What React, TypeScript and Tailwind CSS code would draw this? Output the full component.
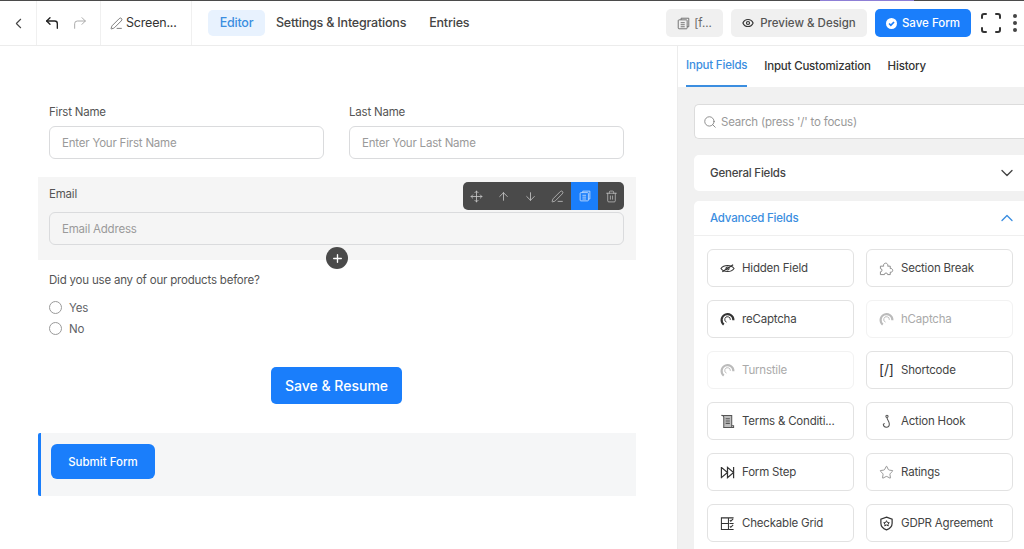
import {
  ArrowDown,
  ArrowUp,
  ChevronDown,
  ChevronLeft,
  ChevronUp,
  CornerUpLeft,
  CornerUpRight,
  Eye,
  Move,
  PenLine,
  Plus,
  Search,
  Star,
  Trash2,
} from 'lucide-react';

function Captcha({ className }: { className?: string }) {
  return (
    <svg viewBox="0 0 16 16" fill="none" className={className} stroke="currentColor" strokeWidth="2.300">
      <path d="M4 13.400A6.300 6.300 0 1 1 14.300 8.800" />
      <path d="M7 10.800A3 3 0 1 1 11 8.400" strokeWidth="1" />
    </svg>
  );
}

function HiddenEye({ className }: { className?: string }) {
  return (
    <svg viewBox="0 0 16 16" fill="none" className={className} stroke="currentColor" strokeWidth="1.100">
      <path d="M1 8c1.600-2.200 4-3.300 7-3.300s5.400 1.100 7 3.300c-1.600 2.200-4 3.300-7 3.300S2.600 10.200 1 8Z" />
      <circle cx="8" cy="8" r="1.700" />
      <path d="M2.500 11.500 14 4" strokeWidth="1.300" />
    </svg>
  );
}

function PuzzlePiece({ className }: { className?: string }) {
  return (
    <svg viewBox="0 0 16 16" fill="none" className={className} stroke="currentColor" strokeWidth="1">
      <path d="M1.500 5.500H5a2.300 2.300 0 1 1 4.400-.6l-.2.600H12v2.600a2 2 0 1 1 0 3.800v2.600H9.200a1.700 1.700 0 1 0-3.400 0H1.500v-3a1.700 1.700 0 1 0 0-3.400V5.500Z" />
    </svg>
  );
}

function ScrollDoc({ className }: { className?: string }) {
  return (
    <svg viewBox="0 0 16 16" className={className} fill="none" stroke="currentColor" strokeWidth="1.100">
      <path d="M1.500 1.500h11v13H4V3.500a2 2 0 0 0-2.500-2Z" fill="#bdbdbd" />
      <path d="M12.500 12.500h2v2H4M6 5h4.500M6 7.500h4.500M6 10h4.500" />
    </svg>
  );
}

function FormStep({ className }: { className?: string }) {
  return (
    <svg viewBox="0 0 16 16" fill="none" className={className} stroke="currentColor" strokeWidth="1.300">
      <path d="M1.500 2v12M14.500 2v12M1.500 2.500 8 8l-6.500 5.500M8 2.500 14.500 8 8 13.500V2.500Z" />
    </svg>
  );
}

function Hook({ className }: { className?: string }) {
  return (
    <svg viewBox="0 0 16 16" fill="none" className={className} stroke="currentColor" strokeWidth="1.100">
      <circle cx="8.500" cy="2.500" r="1.200" />
      <path d="M8.500 3.700c0 2.500 2.500 3.500 2.500 7a3.200 3.200 0 0 1-6.400.3l1.400-1" />
    </svg>
  );
}

function GridCheck({ className }: { className?: string }) {
  return (
    <svg viewBox="0 0 16 16" fill="none" className={className} stroke="currentColor" strokeWidth="1.100">
      <path d="M9 2H1.500v12.500H9V2ZM1.500 8H9M9 2h5.500M9 14.500h5.500" />
      <path d="m10.500 4.500 1 1 2.500-2.500M10.500 11l1 1 2.500-2.500M10 8h4.500" />
    </svg>
  );
}

function ShieldStar({ className }: { className?: string }) {
  return (
    <svg viewBox="0 0 16 16" fill="none" className={className} stroke="currentColor" strokeWidth="1.300">
      <path d="M8 1.200 14 3.400v4.200c0 3.400-2.500 5.800-6 7.200-3.500-1.400-6-3.800-6-7.200V3.400L8 1.200Z" />
      <path d="m8 5 .9 1.900 2.100.3-1.500 1.400.4 2L8 9.600l-1.900 1 .4-2L5 7.200l2.100-.3L8 5Z" strokeWidth="1" />
    </svg>
  );
}

function DocStack({ className }: { className?: string }) {
  return (
    <svg viewBox="0 0 16 16" fill="none" className={className} stroke="currentColor" strokeWidth="1.100">
      <path d="M5 3.500V1.500h9.500v10.500h-2" />
      <rect x="1.500" y="3.500" width="11" height="11" rx="1" />
      <path d="M4.500 7h5M4.500 9.500h5M4.500 12h5" />
    </svg>
  );
}

function FullscreenCorners() {
  return (
    <svg viewBox="0 0 20 20" fill="none" className="w-5 h-5 text-[#333]" stroke="currentColor" strokeWidth="2" strokeLinecap="round">
      <path d="M1 5V3a2 2 0 0 1 2-2h2M15 1h2a2 2 0 0 1 2 2v2M19 15v2a2 2 0 0 1-2 2h-2M5 19H3a2 2 0 0 1-2-2v-2" />
    </svg>
  );
}

function Shortcode() {
  return <span className="w-[15px] text-[14px] leading-none text-[#333] shrink-0 whitespace-nowrap">[/]</span>;
}

const iconClass = 'w-[15px] h-[15px] shrink-0';

const advancedFields = [
  { label: 'Hidden Field', icon: <HiddenEye className={`${iconClass} text-[#333]`} /> },
  { label: 'Section Break', icon: <PuzzlePiece className={`${iconClass} text-[#888]`} /> },
  { label: 'reCaptcha', icon: <Captcha className={`${iconClass} text-[#333]`} /> },
  { label: 'hCaptcha', icon: <Captcha className={`${iconClass} text-[#bbb]`} />, disabled: true },
  { label: 'Turnstile', icon: <Captcha className={`${iconClass} text-[#bbb]`} />, disabled: true },
  { label: 'Shortcode', icon: <Shortcode /> },
  { label: 'Terms & Conditi...', icon: <ScrollDoc className={`${iconClass} text-[#555]`} /> },
  { label: 'Action Hook', icon: <Hook className={`${iconClass} text-[#555]`} /> },
  { label: 'Form Step', icon: <FormStep className={`${iconClass} text-[#333]`} /> },
  { label: 'Ratings', icon: <Star className={`${iconClass} text-[#777]`} strokeWidth={1.2} /> },
  { label: 'Checkable Grid', icon: <GridCheck className={`${iconClass} text-[#333]`} /> },
  { label: 'GDPR Agreement', icon: <ShieldStar className={`${iconClass} text-[#333]`} /> },
];

function Field({ label, placeholder }: { label: string; placeholder: string }) {
  return (
    <div className="flex-1">
      <div className="text-[11.5px] tracking-[-0.2px] leading-[16px] text-[#555] mb-[6px]">{label}</div>
      <div className="h-[33px] rounded-[6px] border border-[#dadbdd] px-3 pt-[2px] flex items-center text-[11.5px] tracking-[-0.2px] text-[#9a9a9a] bg-white">
        {placeholder}
      </div>
    </div>
  );
}

function Radio({ label }: { label: string }) {
  return (
    <div className="h-[21px] flex items-center gap-[7px] text-[11.5px] tracking-[-0.2px] text-[#606266]">
      <span className="w-[13px] h-[13px] rounded-full border border-[#9a9a9a] bg-white" />
      <span className="pt-[2px]">{label}</span>
    </div>
  );
}

function Header() {
  return (
    <header className="h-[46px] shrink-0 flex flex-col border-b border-[#ececec]">
      <div className="h-[1px] flex shrink-0 bg-[#4b4b4b]">
        <div className="ml-[820px] w-[94px] bg-[#8e7fd6]" />
      </div>
      <div className="flex-1 flex items-stretch text-[12.5px] tracking-[-0.2px] text-[#333]">
        <div className="w-[37px] flex items-center justify-center border-r border-[#f0f0f0]">
          <ChevronLeft className="w-[17px] h-[17px] text-[#444]" strokeWidth={1.5} />
        </div>
        <div className="w-[64px] flex items-center gap-[12px] pl-[7px] border-r border-[#f0f0f0]">
          <CornerUpLeft className="w-[16px] h-[16px] text-[#222]" strokeWidth={2} />
          <CornerUpRight className="w-[16px] h-[16px] text-[#aaa]" strokeWidth={1.5} />
        </div>
        <div className="w-[91px] flex items-center gap-[3px] pl-[9px] border-r border-[#f0f0f0]">
          <PenLine className="w-[13px] h-[13px] text-[#555]" strokeWidth={1.4} />
          <span className="pt-[1px]">Screen...</span>
        </div>
        <nav className="flex items-center ml-[16px] gap-[11px] font-medium">
          <span className="h-[26px] w-[57px] rounded-[5px] bg-[#e8f2fe] text-[#3b8ee0] flex items-center justify-center pt-[1px]">Editor</span>
          <span className="text-[#444] pt-[1px]">Settings & Integrations</span>
          <span className="ml-[12px] text-[#444] pt-[1px]">Entries</span>
        </nav>
        <div className="ml-auto flex items-center pr-[7px] tracking-normal">
          <button className="h-[28px] w-[57px] rounded-[5px] bg-[#f0f0f0] text-[#666] text-[11.5px] flex items-center justify-center gap-[4px]">
            <DocStack className="w-[13px] h-[13px]" />
            <span className="pt-[1px]">[f...</span>
          </button>
          <button className="ml-[8px] h-[28px] w-[136px] rounded-[5px] bg-[#f0f0f0] text-[#555] text-[11.5px] font-medium flex items-center justify-center gap-[6px]">
            <Eye className="w-[12px] h-[12px] text-[#333]" strokeWidth={2.4} />
            <span className="pt-[1px]">Preview & Design</span>
          </button>
          <button className="ml-[8px] h-[28px] w-[96px] rounded-[5px] bg-[#1a7efb] text-white text-[11.5px] font-medium flex items-center justify-center gap-[5px]">
            <span className="w-[11px] h-[11px] rounded-full bg-white flex items-center justify-center">
              <svg viewBox="0 0 10 10" className="w-[11px] h-[11px]" fill="none" stroke="#1a7efb" strokeWidth="1.500">
                <path d="m2.800 5 1.600 1.600L7.300 3.600" />
              </svg>
            </span>
            <span className="pt-[1px]">Save Form</span>
          </button>
          <div className="ml-[10px]">
            <FullscreenCorners />
          </div>
          <div className="ml-[12px] flex flex-col gap-[3px]">
            <span className="w-[4px] h-[4px] rounded-full bg-[#444]" />
            <span className="w-[4px] h-[4px] rounded-full bg-[#444]" />
            <span className="w-[4px] h-[4px] rounded-full bg-[#444]" />
          </div>
        </div>
      </div>
    </header>
  );
}

function Canvas() {
  return (
    <main className="w-[677px] shrink-0 pt-[58px] pl-[38px] pr-[41px] bg-white">
      <div className="flex gap-[25px] pl-[11px] pr-[12px]">
        <Field label="First Name" placeholder="Enter Your First Name" />
        <Field label="Last Name" placeholder="Enter Your Last Name" />
      </div>

      <div className="relative mt-[18px] h-[83px] bg-[#f5f5f5] pt-[9px] pl-[11px] pr-[12px]">
        <div className="text-[11.5px] tracking-[-0.2px] leading-[16px] text-[#555] mb-[10px]">Email</div>
        <div className="h-[33px] rounded-[6px] border border-[#dadbdd] px-3 pt-[2px] flex items-center text-[11.5px] tracking-[-0.2px] text-[#9a9a9a]">
          Email Address
        </div>
        <div className="absolute top-[5px] right-[12px] h-[28px] w-[161px] rounded-[5px] bg-[#4a4a4a] flex items-center overflow-hidden text-[#c9c9c9]">
          <span className="w-[27px] flex justify-center"><Move className="w-[13px] h-[13px]" strokeWidth={1.5} /></span>
          <span className="w-[27px] flex justify-center"><ArrowUp className="w-[13px] h-[13px]" strokeWidth={1.5} /></span>
          <span className="w-[26px] flex justify-center"><ArrowDown className="w-[13px] h-[13px]" strokeWidth={1.5} /></span>
          <span className="w-[28px] flex justify-center"><PenLine className="w-[13px] h-[13px]" strokeWidth={1.4} /></span>
          <span className="w-[27px] h-full bg-[#1a7efb] flex items-center justify-center text-[#cfe3fd]"><DocStack className="w-[12px] h-[12px]" /></span>
          <span className="w-[26px] flex justify-center"><Trash2 className="w-[13px] h-[13px]" strokeWidth={1.3} /></span>
        </div>
        <div className="absolute left-[288px] top-[70px] w-[22px] h-[22px] rounded-full bg-[#4a4a4a] flex items-center justify-center">
          <Plus className="w-[13px] h-[13px] text-white" strokeWidth={2.5} />
        </div>
      </div>

      <div className="mt-[12px] px-[11px]">
        <div className="text-[11.5px] tracking-[-0.2px] leading-[16px] text-[#555] mb-[9px]">Did you use any of our products before?</div>
        <Radio label="Yes" />
        <Radio label="No" />
      </div>

      <div className="flex justify-center pr-[1px] mt-[28px]">
        <button className="h-[37px] w-[131px] rounded-[5px] bg-[#1a7efb] text-white text-[14px] font-medium">Save & Resume</button>
      </div>

      <div className="mt-[29px] h-[63px] border-l-[3px] border-[#1a7efb] bg-[#f5f6f7] pl-[10px] pt-[11px] rounded-l-[2px]">
        <button className="h-[35px] w-[104px] pt-[2px] rounded-[6px] bg-[#1a7efb] text-white text-[11.5px] font-medium">Submit Form</button>
      </div>
    </main>
  );
}

function Sidebar() {
  return (
    <aside className="flex-1 min-w-0 border-l border-[#ececec] flex flex-col bg-[#f1f1f1]">
      <div className="h-[41px] shrink-0 bg-white flex items-stretch pl-[8px] gap-[17px] text-[11.5px] tracking-[-0.2px] font-medium text-[#333]">
        <span className="flex items-center text-[#3b8ee0] border-b-2 border-[#3b8ee0] pt-[1px]">Input Fields</span>
        <span className="flex items-center">Input Customization</span>
        <span className="flex items-center">History</span>
      </div>
      <div className="flex-1 pl-[16px]">
        <div className="mt-[17px] h-[35px] rounded-l-[5px] border border-r-0 border-[#dcdcdc] bg-white flex items-center pl-[8px] gap-[4px] text-[11.5px] tracking-[-0.2px] text-[#999]">
          <Search className="w-[14px] h-[14px] text-[#777]" strokeWidth={1.4} />
          <span className="pt-[2px]">Search (press '/' to focus)</span>
        </div>
        <div className="mt-[16px] h-[36px] rounded-l-[5px] bg-white flex items-center justify-between pl-[16px] pr-[7px] text-[11.5px] tracking-[-0.2px] font-medium text-[#444]">
          <span className="pt-[1px]">General Fields</span>
          <ChevronDown className="w-[20px] h-[20px] text-[#444]" strokeWidth={1.6} />
        </div>
        <div className="mt-[10px] rounded-l-[5px] bg-white h-[400px]">
          <div className="h-[35px] border-b border-[#efefef] flex items-center justify-between pl-[16px] pr-[7px] text-[11.5px] tracking-[-0.2px] font-medium text-[#3b8ee0]">
            <span className="pt-[1px]">Advanced Fields</span>
            <ChevronUp className="w-[20px] h-[20px] text-[#3b8ee0]" strokeWidth={1.6} />
          </div>
          <div className="grid grid-cols-[147px_147px] gap-x-[12px] gap-y-[13px] pl-[13px] pt-[13px]">
            {advancedFields.map((f) => (
              <div
                key={f.label}
                className={`h-[38px] rounded-[6px] border flex items-center gap-[7px] pl-[12px] text-[11.5px] tracking-[-0.2px] ${
                  f.disabled ? 'border-[#f2f2f2] text-[#aaa]' : 'border-[#e2e2e2] text-[#444]'
                }`}
              >
                {f.icon}
                <span className="whitespace-nowrap pt-[1px]">{f.label}</span>
              </div>
            ))}
          </div>
        </div>
      </div>
    </aside>
  );
}

export default function App() {
  return (
    <div className="w-[1024px] h-[549px] overflow-hidden flex flex-col bg-white font-['Inter',sans-serif]">
      <Header />
      <div className="flex-1 flex min-h-0">
        <Canvas />
        <Sidebar />
      </div>
    </div>
  );
}
